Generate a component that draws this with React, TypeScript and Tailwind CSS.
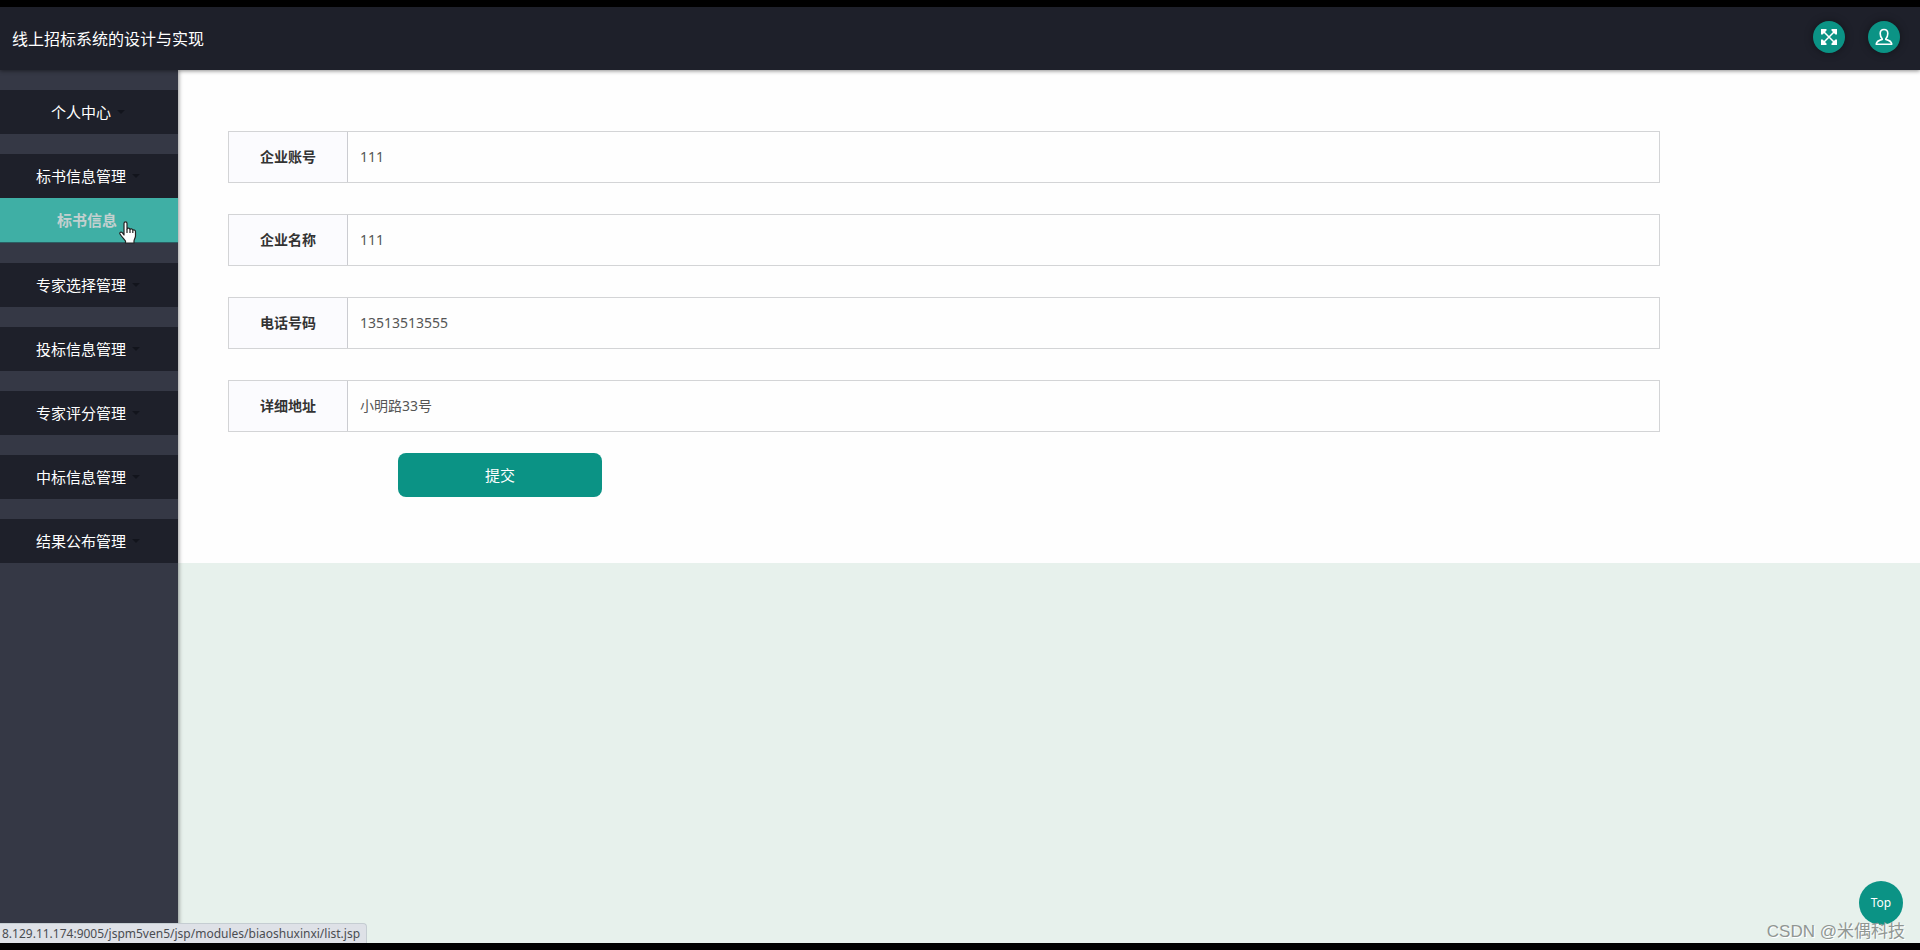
import { FC, ReactNode, useState } from 'react';

type MenuItem = {
  title: string;
  children?: string[];
};

type Field = {
  name: string;
  label: string;
  value: string;
};

const menu: MenuItem[] = [
  { title: '个人中心' },
  { title: '标书信息管理', children: ['标书信息'] },
  { title: '专家选择管理' },
  { title: '投标信息管理' },
  { title: '专家评分管理' },
  { title: '中标信息管理' },
  { title: '结果公布管理' },
];

const fields: Field[] = [
  { name: 'account', label: '企业账号', value: '111' },
  { name: 'company', label: '企业名称', value: '111' },
  { name: 'phone', label: '电话号码', value: '13513513555' },
  { name: 'address', label: '详细地址', value: '小明路33号' },
];

const RoundButton: FC<{ label: string; children: ReactNode }> = ({
  label,
  children,
}) => (
  <button
    type="button"
    aria-label={label}
    className="flex size-8 items-center justify-center rounded-full bg-[#0b9385] text-white shadow-[0_0_8px_rgba(0,0,0,0.4)]"
  >
    {children}
  </button>
);

const Header: FC = () => (
  <header className="relative z-10 flex h-[63px] shrink-0 items-center justify-between bg-[#1e202a] pr-5 pl-3 shadow-[0_1px_4px_rgba(0,0,0,0.45)]">
    <h1 className="text-base text-white">线上招标系统的设计与实现</h1>
    <div className="flex gap-[23px] pb-1">
      <RoundButton label="全屏">
        <svg
          viewBox="0 0 16 16"
          className="size-4"
          fill="currentColor"
          stroke="currentColor"
          strokeWidth="1.5"
        >
          <path d="M2 2l12 12M14 2L2 14" />
          <path
            stroke="none"
            d="M0 0h5.500v1.600L1.600 5.500H0zM16 0v5.500h-1.600l-3.900-3.900V0zM16 16h-5.500v-1.600l3.900-3.900H16zM0 16v-5.500h1.600l3.900 3.900V16z"
          />
        </svg>
      </RoundButton>
      <RoundButton label="用户">
        <svg
          viewBox="0 0 18 18"
          className="size-[18px]"
          fill="none"
          stroke="currentColor"
          strokeWidth="1.6"
          strokeLinejoin="round"
        >
          <path d="M7.200 10.800C5.800 9.600 5.200 7.600 5.200 5.600 5.200 3 6.600 1.500 9 1.500s3.800 1.500 3.800 4.100c0 2-.6 4-2 5.200v.6c3.200.8 5.600 2 6 4.800H1.200c.4-2.800 2.800-4 6-4.800z" />
        </svg>
      </RoundButton>
    </div>
  </header>
);

const Sidebar: FC = () => (
  <nav
    aria-label="主菜单"
    className="relative w-[178px] shrink-0 bg-[#353845] pt-5 shadow-[1px_0_4px_rgba(0,0,0,0.4)]"
  >
    <ul className="flex flex-col gap-5">
      {menu.map((item) => (
        <li key={item.title}>
          <button
            type="button"
            className="flex h-11 w-full items-center justify-center gap-[6px] bg-[#1e202a] pr-[2px] text-[15px] text-white"
          >
            {item.title}
            <span className="border-x-4 border-t-4 border-x-transparent border-t-[#12141c]" />
          </button>
          {item.children?.map((child) => (
            <a
              key={child}
              href="#list"
              className="flex h-[45px] items-center justify-center border-b border-[#2b5f63] bg-[#3fafa5] pr-1 text-[15px] font-bold text-[#c3d0cf]"
            >
              {child}
            </a>
          ))}
        </li>
      ))}
    </ul>
  </nav>
);

const ProfileForm: FC = () => {
  const [values, setValues] = useState<Record<string, string>>(
    Object.fromEntries(fields.map((f) => [f.name, f.value])),
  );

  return (
    <form
      className="bg-[#fefefe] pt-[61px] pb-[66px] pl-[50px]"
      onSubmit={(e) => e.preventDefault()}
    >
      <div className="mr-[260px] flex flex-col gap-[31px]">
        {fields.map((field) => (
          <div key={field.name} className="flex h-[52px] border border-[#d3d4d6]">
            <label
              htmlFor={field.name}
              className="flex w-[119px] shrink-0 items-center justify-center border-r border-[#cbccd1] bg-[#fbfbfe] text-sm font-bold text-[#333]"
            >
              {field.label}
            </label>
            <input
              id={field.name}
              value={values[field.name]}
              onChange={(e) =>
                setValues({ ...values, [field.name]: e.target.value })
              }
              className="min-w-0 flex-1 px-3 text-sm text-[#555] outline-none"
            />
          </div>
        ))}
      </div>
      <button
        type="submit"
        className="mt-[21px] ml-[170px] block h-11 w-[204px] rounded-lg bg-[#0b9385] text-[15px] text-white"
      >
        提交
      </button>
    </form>
  );
};

const Pointer: FC = () => (
  <svg
    viewBox="0 0 18 23"
    className="absolute top-[214px] left-[119px] z-20 h-[23px] w-[18px]"
    fill="#fff"
    stroke="#222"
    strokeWidth="1.2"
    strokeLinejoin="round"
  >
    <path d="M5 14V2.500C5 .3 8 .3 8 2.500V8c.3-1.300 2.700-1.200 3 .5.500-1 2.600-.8 2.800.8.6-.8 2.700-.5 2.700 1.500V15c0 2-1.500 3.500-1.500 5v2H6.500v-2C5 18 2.500 15.500 1 13c-.8-1.600 1.200-2.600 2.300-1.300z" />
    <path d="M8 8v4M11 8.500V12M13.800 9.500V12" />
  </svg>
);

export default function App() {
  return (
    <div className="relative flex min-h-screen flex-col border-y-[7px] border-black bg-[#e7f1ec] font-['Noto_Sans','Noto_Sans_CJK_SC',sans-serif]">
      <Header />
      <div className="flex flex-1">
        <Sidebar />
        <main className="min-w-0 flex-1">
          <ProfileForm />
        </main>
      </div>
      <Pointer />
      <div className="absolute bottom-0 left-0 z-20 h-5 rounded-tr border-t border-r border-[#c5cdd2] bg-[#dee1e7] pr-[6px] pl-[2px] text-xs leading-5 text-[#4a4d52]">
        8.129.11.174:9005/jspm5ven5/jsp/modules/biaoshuxinxi/list.jsp
      </div>
      <button
        type="button"
        className="absolute right-[17px] bottom-[18px] size-11 rounded-full bg-[#0b9385] text-xs text-white"
      >
        Top
      </button>
      <p className="absolute right-[15px] bottom-0 z-20 font-['Liberation_Sans','Noto_Sans_CJK_SC',sans-serif] text-[17px] leading-[22px] text-[#909693] [text-shadow:1px_1px_0_#fff]">
        CSDN @米偶科技
      </p>
    </div>
  );
}
